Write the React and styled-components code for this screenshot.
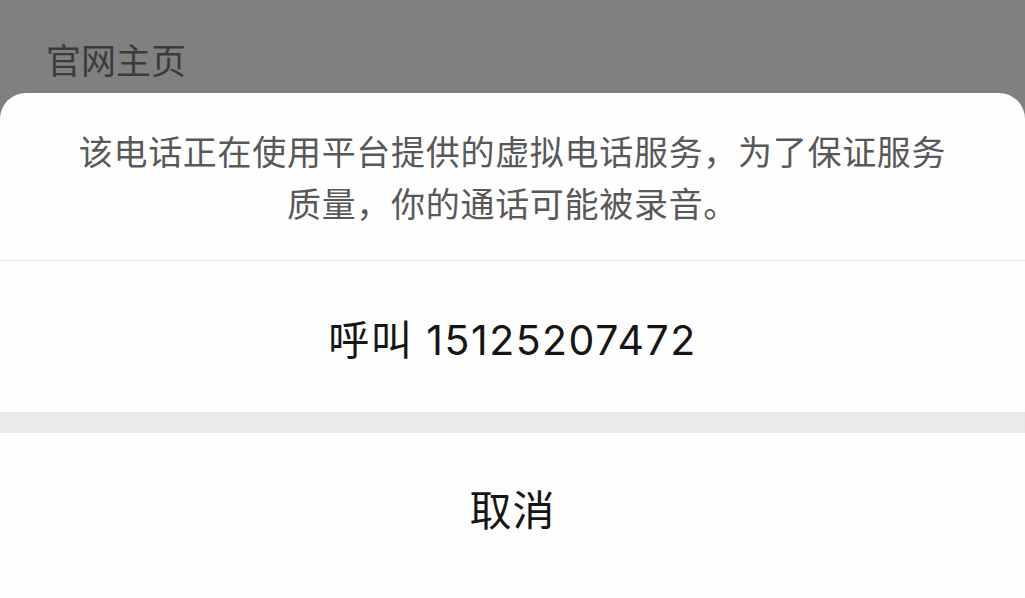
import React from "react";
import styled, { createGlobalStyle } from "styled-components";

const GlobalStyle = createGlobalStyle`
  html, body {
    margin: 0;
    padding: 0;
    background: #808080;
    overflow: hidden;
  }
  body {
    font-family: "Noto Sans CJK SC", "Noto Sans", sans-serif;
  }
`;

const Page = styled.div`
  width: 1025px;
  height: 598px;
  display: flex;
  flex-direction: column;
  background: #808080;
  overflow: hidden;
`;

const Header = styled.div`
  height: 93px;
  flex-shrink: 0;
  display: flex;
  align-items: center;
  padding-left: 46px;
  padding-top: 23px;
  box-sizing: border-box;
  font-size: 35px;
  color: #3b3b3b;
`;

const Sheet = styled.div`
  flex: 1;
  display: flex;
  flex-direction: column;
  background: #fefefe;
  border-radius: 26px 26px 0 0;
  overflow: hidden;
`;

const Message = styled.div`
  height: 168px;
  flex-shrink: 0;
  box-sizing: border-box;
  padding-top: 32px;
  display: flex;
  flex-direction: column;
  align-items: center;
  font-size: 34px;
  line-height: 52px;
  letter-spacing: 0.7px;
  color: #585858;
  border-bottom: 1px solid #e6e6e6;
`;

const Action = styled.div`
  height: ${(p) => p.$height}px;
  flex-shrink: 0;
  display: flex;
  justify-content: center;
  box-sizing: border-box;
  padding-top: ${(p) => p.$top}px;
  font-family: "Inter", "Noto Sans CJK SC", sans-serif;
  font-size: ${(p) => p.$size}px;
  line-height: 48px;
  color: #161616;
  letter-spacing: ${(p) => p.$spacing || 0}px;
`;

const Gap = styled.div`
  height: 21px;
  flex-shrink: 0;
  background: #ebebeb;
  box-shadow: inset 0 1px 2px rgba(0, 0, 0, 0.03);
`;

export default function App() {
  return (
    <Page>
      <GlobalStyle />
      <Header>官网主页</Header>
      <Sheet>
        <Message>
          <span>该电话正在使用平台提供的虚拟电话服务，为了保证服务</span>
          <span>质量，你的通话可能被录音。</span>
        </Message>
        <Action $height={151} $top={55} $size={41} $spacing={1.5}>
          呼叫 15125207472
        </Action>
        <Gap />
        <Action $height={166} $top={54} $size={42} $spacing={1}>
          取消
        </Action>
      </Sheet>
    </Page>
  );
}
